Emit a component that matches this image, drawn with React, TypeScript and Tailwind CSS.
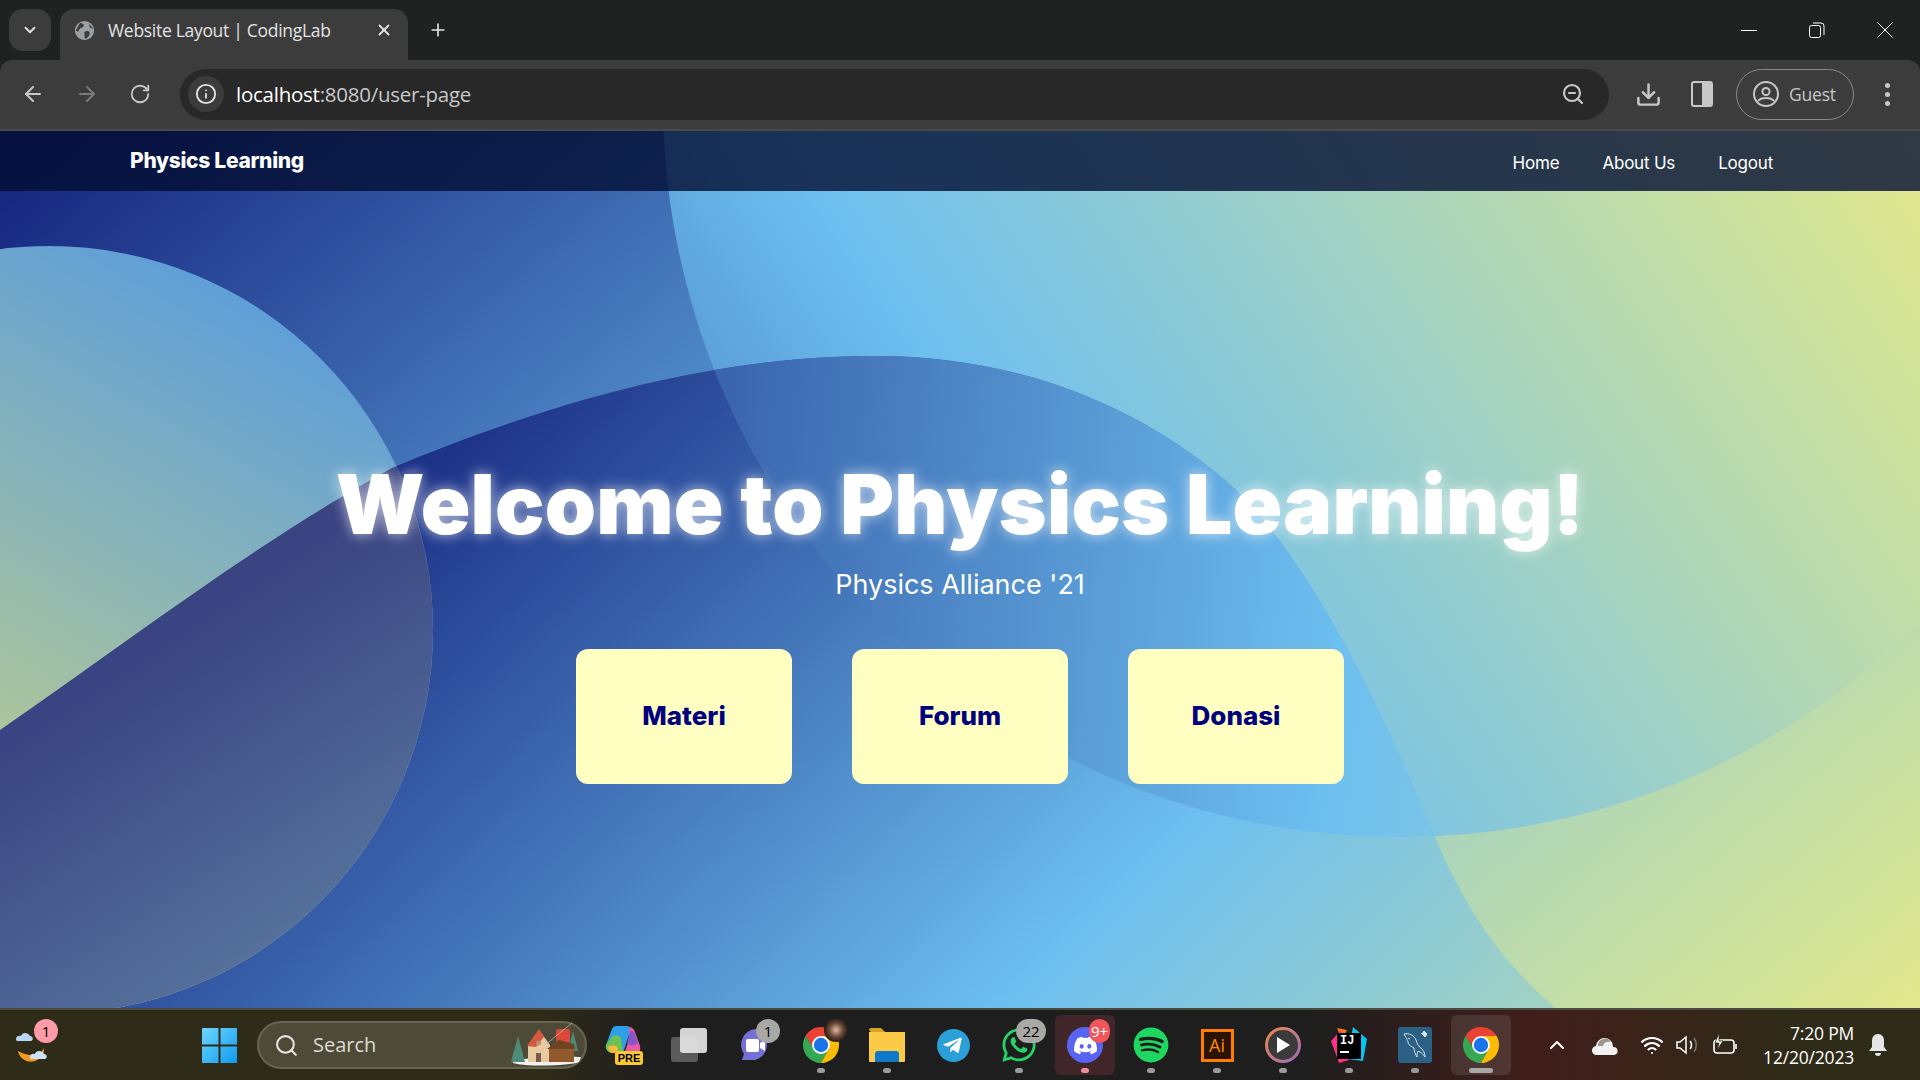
import { ArrowLeft, ArrowRight, ChevronDown, ChevronUp, Download, Info, Plus, RotateCw, Search, Wifi, X, ZoomOut } from "lucide-react";
import { FaDiscord, FaSpotify, FaTelegramPlane, FaWhatsapp } from "react-icons/fa";
import type { ReactNode } from "react";

const ChromeLogo = ({ size = 36 }: { size?: number }) => (
  <svg width={size} height={size} viewBox="4 4 40 40">
    <path d="M41.32 14A20 20 0 0 0 6.68 14L16 28L24 14Z" fill="#ea4335" />
    <path d="M6.68 14A20 20 0 0 0 24 44L33 28L16 28Z" fill="#34a853" />
    <path d="M24 44A20 20 0 0 0 41.32 14L24 14L33 28Z" fill="#fbbc04" />
    <circle cx="24" cy="24" r="10" fill="#fff" />
    <circle cx="24" cy="24" r="8" fill="#1a73e8" />
  </svg>
);

const HeroShapes = () => (
  <svg className="absolute inset-0 h-full w-full" viewBox="0 131 1920 877" preserveAspectRatio="none">
    <defs>
      <linearGradient id="base" gradientUnits="userSpaceOnUse" x1="0" y1="191" x2="1213" y2="1614">
        <stop offset="0" stopColor="#17267f" />
        <stop offset="0.5" stopColor="#6dbff0" />
        <stop offset="1" stopColor="#e2e88c" />
      </linearGradient>
      <linearGradient id="ring" gradientUnits="userSpaceOnUse" x1="104" y1="811" x2="1657" y2="-231">
        <stop offset="0" stopColor="#17267f" />
        <stop offset="0.5" stopColor="#6dbff0" />
        <stop offset="1" stopColor="#e2e88c" />
      </linearGradient>
      <linearGradient id="wave" gradientUnits="userSpaceOnUse" x1="195" y1="600" x2="1385" y2="1819">
        <stop offset="0" stopColor="#17267f" />
        <stop offset="0.5" stopColor="#6dbff0" />
        <stop offset="1" stopColor="#e2e88c" />
      </linearGradient>
      <linearGradient id="waveRing" gradientUnits="userSpaceOnUse" x1="285" y1="333" x2="2433" y2="566">
        <stop offset="0" stopColor="#17267f" />
        <stop offset="0.5" stopColor="#6dbff0" />
        <stop offset="1" stopColor="#e2e88c" />
      </linearGradient>
      <linearGradient id="left" gradientUnits="userSpaceOnUse" x1="250" y1="300" x2="0" y2="750">
        <stop offset="0" stopColor="#5f9fd8" />
        <stop offset="1" stopColor="#afc69a" />
      </linearGradient>
      <linearGradient id="leftWave" gradientUnits="userSpaceOnUse" x1="50" y1="720" x2="250" y2="1020">
        <stop offset="0" stopColor="#3a4482" />
        <stop offset="1" stopColor="#5a78a0" />
      </linearGradient>
      <clipPath id="waveClip">
        <path d="M0 730C130 640 260 540 392 468C520 415 690 356 875 356C1010 356 1130 400 1224 479C1300 545 1375 690 1434 835C1470 920 1510 970 1560 1012L0 1012Z" />
      </clipPath>
    </defs>
    <rect x="0" y="131" width="1920" height="877" fill="url(#base)" />
    <circle cx="1400" cy="100" r="737" fill="url(#ring)" />
    <path d="M0 730C130 640 260 540 392 468C520 415 690 356 875 356C1010 356 1130 400 1224 479C1300 545 1375 690 1434 835C1470 920 1510 970 1560 1012L0 1012Z" fill="url(#wave)" />
    <circle cx="1400" cy="100" r="737" fill="url(#waveRing)" clipPath="url(#waveClip)" />
    <circle cx="49" cy="630" r="384" fill="url(#left)" />
    <circle cx="49" cy="630" r="384" fill="url(#leftWave)" clipPath="url(#waveClip)" />
  </svg>
);

const TabBar = () => (
  <div className="flex h-[60px] items-end bg-[#202221] pl-[9px] text-[#e3e3e3]">
    <div className="mb-[9px] flex h-[42px] w-[42px] items-center justify-center rounded-[14px] bg-[#3c3c3c]">
      <ChevronDown className="h-[18px] w-[18px]" strokeWidth={2.5} />
    </div>
    <div className="ml-[9px] flex h-[51px] w-[348px] items-center rounded-t-[14px] bg-[#3c3c3c] pb-[9px] pl-[14px] pr-[15px]">
      <svg width="21" height="21" viewBox="0 0 24 24" className="shrink-0">
        <circle cx="12" cy="12" r="11" fill="#9aa0a6" />
        <path d="M7 3c3 1 5 2 4 4s-4 1-5 4-3 2-4 1M13 13c3-1 5 0 5 2s-2 5-4 6-2-2-2-4-1-3 1-4M17 4c1 2 0 4 2 5l3 1" fill="#3c3c3c" />
      </svg>
      <span className="ml-[13px] flex-1 font-['Open_Sans',sans-serif] text-[17.5px] tracking-[-0.3px]">Website Layout | CodingLab</span>
      <X className="h-[18px] w-[18px]" strokeWidth={2.4} />
    </div>
    <div className="mb-[19px] ml-[20px] flex w-[20px] items-center justify-center">
      <Plus className="h-[22px] w-[22px]" strokeWidth={2} />
    </div>
    <div className="mb-[22px] ml-auto flex items-center gap-[52px] pr-[27px]">
      <div className="h-px w-4 bg-white" />
      <svg width="16" height="16" viewBox="0 0 16 16" fill="none" stroke="#fff">
        <rect x="0.5" y="3.5" width="11" height="12" rx="2" />
        <path d="M4 1h8a3 3 0 0 1 3 3v9" />
      </svg>
      <svg width="16" height="16" viewBox="0 0 16 16" stroke="#fff">
        <path d="M0.5 0.5l15 15M15.5 0.5l-15 15" />
      </svg>
    </div>
  </div>
);

const Toolbar = () => (
  <div className="flex h-[71px] items-center rounded-t-[12px] border-b-2 border-[#4a4a4a] bg-[#3c3c3c] pb-[1px] text-[#c7c7c7]">
    <div className="flex w-[180px] items-center pl-[21px]">
      <ArrowLeft className="h-[24px] w-[24px]" strokeWidth={2} />
      <ArrowRight className="ml-[30px] h-[24px] w-[24px] text-[#7b7b7b]" strokeWidth={2} />
      <RotateCw className="ml-[30px] h-[22px] w-[22px]" strokeWidth={2} />
    </div>
    <div className="flex h-[51px] w-[1429px] items-center rounded-full bg-[#282828] pl-[8px] pr-[24px]">
      <div className="flex h-[36px] w-[36px] items-center justify-center rounded-full bg-[#3c3c3c]">
        <Info className="h-[22px] w-[22px] text-[#e3e3e3]" />
      </div>
      <div className="ml-[12px] flex-1 font-['Open_Sans',sans-serif] text-[20.5px] tracking-[-0.25px] text-[#c7c7c7]">
        <span className="text-white">localhost</span>:8080/user-page
      </div>
      <ZoomOut className="h-[24px] w-[24px]" strokeWidth={2.2} />
    </div>
    <Download className="ml-[26px] h-[27px] w-[27px]" strokeWidth={2.2} />
    <div className="ml-[29px] flex h-[26px] w-[22px] overflow-hidden rounded-[3px] border-[2.5px] border-[#c7c7c7]">
      <div className="w-1/2" />
      <div className="w-1/2 bg-[#c7c7c7]" />
    </div>
    <div className="ml-[23px] flex h-[51px] w-[118px] items-center rounded-full border-[1.5px] border-[#8a8a8a] pl-[16px]">
      <svg width="26" height="26" viewBox="0 0 26 26" fill="none" stroke="#c7c7c7" strokeWidth="2">
        <circle cx="13" cy="13" r="12" />
        <circle cx="13" cy="10.5" r="3.6" />
        <path d="M5 20c3-4 13-4 16 0" />
      </svg>
      <span className="ml-[10px] font-['Open_Sans',sans-serif] text-[17.5px] tracking-[-0.2px]">Guest</span>
    </div>
    <div className="ml-[31px] flex flex-col gap-[4px]">
      <div className="h-[5px] w-[5px] rounded-full bg-[#c7c7c7]" />
      <div className="h-[5px] w-[5px] rounded-full bg-[#c7c7c7]" />
      <div className="h-[5px] w-[5px] rounded-full bg-[#c7c7c7]" />
    </div>
  </div>
);

const SiteNav = () => (
  <nav className="relative flex h-[60px] items-center bg-[#020e32]/80 pl-[130px] pr-[147px] font-['Inter',sans-serif] text-white">
    <div className="text-[21px] font-extrabold tracking-[-0.3px]">Physics Learning</div>
    <div className="ml-auto mt-[5px] flex items-center gap-[43px] text-[17px] tracking-[-0.2px]">
      <span>Home</span>
      <span>About Us</span>
      <span>Logout</span>
    </div>
  </nav>
);

const Hero = () => (
  <div className="relative flex flex-col items-center pt-[258px] font-['Inter',sans-serif] text-white">
    <h1 className="text-[82px] font-black leading-[112px] tracking-[0.2px] [text-shadow:0_0_14px_rgba(255,255,255,0.7)]">Welcome to Physics Learning!</h1>
    <p className="mt-[3px] text-[27px] leading-[42px]">Physics Alliance '21</p>
    <div className="mt-[43px] flex gap-[60px]">
      {["Materi", "Forum", "Donasi"].map((label) => (
        <div key={label} className="flex h-[135px] w-[216px] items-center justify-center rounded-[12px] bg-[#ffffc2] pb-[2px] text-[26px] font-extrabold text-[#00007f]">
          {label}
        </div>
      ))}
    </div>
  </div>
);

type SlotProps = { children: ReactNode; dot?: "grey" | "pink" | "wide"; bg?: string };

const Slot = ({ children, dot, bg }: SlotProps) => (
  <div className={`relative flex h-[60px] w-[60px] items-center justify-center rounded-[6px] ${bg ?? ""}`}>
    {children}
    {dot === "grey" && <div className="absolute bottom-[2px] h-[5px] w-[8px] rounded-full bg-[#9a9a9a]" />}
    {dot === "pink" && <div className="absolute bottom-[2px] h-[5px] w-[8px] rounded-full bg-[#f58a9b]" />}
    {dot === "wide" && <div className="absolute bottom-[2px] h-[5px] w-[24px] rounded-full bg-[#a8a8a8]" />}
  </div>
);

const Badge = ({ text, className }: { text: string; className: string }) => (
  <div className={`absolute flex h-[24px] items-center justify-center rounded-full font-['Open_Sans',sans-serif] text-[15px] ${className}`}>{text}</div>
);

const SearchScene = () => (
  <svg width="74" height="44" viewBox="0 0 74 44">
    <path d="M3 38c12-4 55-5 68-4l-2 5c-8 4-54 5-66 1z" fill="#f3f1ee" />
    <path d="M8 13l7 26H1z" fill="#4e8a78" />
    <path d="M63 8l5 20H58z" fill="#4e8a78" />
    <path d="M18 22l11-15 11 15v17H18z" fill="#e8c9a0" />
    <path d="M17 23l12-17 5 8-8 10z" fill="#d5583b" />
    <rect x="26" y="30" width="5" height="9" fill="#7a5a48" />
    <circle cx="28.5" cy="20" r="2.5" fill="#b98e78" />
    <rect x="46" y="6" width="14" height="14" rx="2" fill="#d94a3a" />
    <path d="M35 22L62 0" stroke="#c9c4c0" strokeWidth="0.7" />
    <rect x="39" y="25" width="25" height="14" fill="#8f5a2c" />
    <path d="M37 26l12-9 15 4 1 5z" fill="#6d4321" />
  </svg>
);

const Taskbar = () => (
  <footer className="relative flex h-[72px] items-center border-t-2 border-[#4b4a40] bg-[linear-gradient(90deg,#2e2b18_0%,#2e2b18_28%,#1e1e1e_34%,#1e1e1e_68%,#401e1a_80%,#2e2b18_94%)] text-white">
    <div className="relative ml-[14px] h-[44px] w-[44px]">
      <svg width="44" height="44" viewBox="0 0 44 44">
        <path d="M4 28c2 12 19 15 25 3 1-2 1-4 1-6-3 7-14 10-26 3z" fill="#f09a1f" />
        <path d="M2 16c0-3 3-4 5-3 1-4 7-4 9 0 3 0 4 4 1 5H4c-2 0-2-1-2-2z" fill="#b9d6f5" />
        <path d="M16 34c0-3 3-4 5-3 1-4 7-4 9 0 3 0 4 4 1 5H18c-2 0-2-1-2-2z" fill="#cfe2f8" />
      </svg>
      <Badge text="1" className="right-0 -top-[4px] w-[24px] bg-[#ff9aa8] text-black" />
    </div>
    <svg width="35" height="35" viewBox="0 0 35 35" className="ml-[144px]">
      <defs>
        <linearGradient id="win" x1="0" y1="0" x2="1" y2="1">
          <stop offset="0" stopColor="#6fd6ff" />
          <stop offset="1" stopColor="#0f9bf0" />
        </linearGradient>
      </defs>
      <path d="M1 0h15.5v16.5H0V1a1 1 0 0 1 1-1zM18.5 0H34a1 1 0 0 1 1 1v15.5H18.5zM0 18.5h16.5V35H1a1 1 0 0 1-1-1zM18.5 18.5H35V34a1 1 0 0 1-1 1H18.5z" fill="url(#win)" />
    </svg>
    <div className="ml-[20px] flex h-[48px] w-[330px] items-center rounded-full border-2 border-[#66654f] bg-[#4d4b37] pl-[15px] pr-[1px]">
      <Search className="h-[25px] w-[25px] text-[#e6e6e6]" strokeWidth={2} />
      <span className="ml-[14px] flex-1 font-['Open_Sans',sans-serif] text-[20px] text-[#dcdcd4]">Search</span>
      <SearchScene />
    </div>
    <div className="relative ml-[18px] h-[40px] w-[36px]">
      <svg width="36" height="32" viewBox="0 0 36 32">
        <path d="M11 1h11c2 0 3 1 4 3l-8 24H8c-5 0-8-4-7-8L7 4c1-2 2-3 4-3z" fill="#2f9fe8" />
        <path d="M7 12c2-2 6-2 9 1l2 15H8c-5 0-8-4-7-8z" fill="#6cc24a" />
        <path d="M3 22c3-2 8-2 10 1l-1 5H8c-3 0-4-2-5-6z" fill="#f4b73f" />
        <path d="M24 2c3 0 5 2 6 5l5 14c1 4-1 8-5 8H19l5-14z" fill="#e85aa5" />
        <path d="M25 6c3 0 4 1 5 3l3 9c-3 3-8 3-11 1z" fill="#8a55c8" />
      </svg>
      <div className="absolute -right-[2px] bottom-0 flex h-[14px] w-[28px] items-center justify-center rounded-[3px] bg-[#fdc92f] font-['Liberation_Sans',sans-serif] text-[11px] font-bold leading-none text-black">PRE</div>
    </div>
    <div className="ml-[18px] flex items-center gap-[6px]">
      <Slot>
        <div className="relative h-[34px] w-[36px]">
          <div className="absolute bottom-0 left-0 h-[25px] w-[27px] rounded-[3px] bg-[#5b5b5b]" />
          <div className="absolute right-0 top-0 h-[25px] w-[27px] rounded-[3px] bg-[#e8e8e8]/90" />
        </div>
      </Slot>
      <Slot>
        <svg width="34" height="36" viewBox="0 0 34 36">
          <path d="M17 2a16 16 0 0 1 0 31H4l2-6A16 16 0 0 1 17 2z" fill="#7470d8" />
          <rect x="8" y="12" width="13" height="13" rx="2" fill="#fff" />
          <path d="M22 16l5-3v11l-5-3z" fill="#fff" />
        </svg>
        <Badge text="1" className="right-[5px] top-[4px] w-[24px] bg-[#a8a8a4] text-black" />
      </Slot>
      <Slot dot="grey">
        <ChromeLogo size={36} />
        <div className="absolute right-[3px] top-[3px] h-[24px] w-[24px] rounded-full bg-[radial-gradient(circle_at_50%_50%,#e8b8a8_0%,#6a4a38_40%,#1a1410_75%)]" />
      </Slot>
      <Slot dot="grey">
        <svg width="36" height="34" viewBox="0 0 36 34">
          <path d="M0 2a2 2 0 0 1 2-2h10l4 4H2z" fill="#d9a520" />
          <path d="M0 4h36v29a1 1 0 0 1-1 1H1a1 1 0 0 1-1-1z" fill="#fdca45" />
          <path d="M6 34V26a3 3 0 0 1 3-3h18a3 3 0 0 1 3 3v8z" fill="#0f79c9" />
        </svg>
      </Slot>
      <Slot>
        <div className="flex h-[33px] w-[33px] items-center justify-center rounded-full bg-[#2a9fd8]">
          <FaTelegramPlane className="mr-[2px] h-[21px] w-[21px] text-white" />
        </div>
      </Slot>
      <Slot dot="grey">
        <FaWhatsapp className="h-[38px] w-[38px] text-[#25d366]" />
        <Badge text="22" className="left-[27px] top-[4px] w-[30px] bg-[#a8a8a4] text-black" />
      </Slot>
      <Slot dot="pink" bg="bg-[#402629]">
        <div className="flex h-[36px] w-[36px] items-center justify-center rounded-full bg-[#5865f2]">
          <FaDiscord className="h-[25px] w-[25px] text-white" />
        </div>
        <Badge text="9+" className="right-[5px] top-[4px] w-[21px] bg-[#f0565c] text-white" />
      </Slot>
      <Slot dot="grey">
        <FaSpotify className="h-[36px] w-[36px] text-[#1ed760]" />
      </Slot>
      <Slot dot="grey">
        <div className="flex h-[33px] w-[33px] items-center justify-center border-[3px] border-[#ff7c00] bg-[#2a1300] font-['Open_Sans',sans-serif] text-[18px] leading-none text-[#ff8a00]">Ai</div>
      </Slot>
      <Slot dot="grey">
        <div className="flex h-[36px] w-[36px] items-center justify-center rounded-full bg-[linear-gradient(135deg,#f08a4a,#9a6ac0)] p-[3px]">
          <div className="flex h-full w-full items-center justify-center rounded-full bg-[#3a3a3a]">
            <svg width="14" height="16" viewBox="0 0 14 16">
              <path d="M1 0l13 8-13 8z" fill="#fff" />
            </svg>
          </div>
        </div>
      </Slot>
      <Slot dot="grey">
        <div className="relative h-[36px] w-[36px]">
          <svg width="36" height="36" viewBox="0 0 36 36" className="absolute inset-0">
            <path d="M6 1l10 2 -5 10z" fill="#f97a12" />
            <path d="M0 14L10 3l8 30-10 3z" fill="#ff318c" />
            <path d="M22 0l14 12-4 22-16-2z" fill="#07c3f2" />
          </svg>
          <div className="absolute left-[6px] top-[6px] h-[26px] w-[24px] bg-black pl-[3px] font-['Liberation_Mono',monospace] text-[12px] font-bold leading-[16px] text-white">
            IJ
            <div className="mt-[2px] h-[2px] w-[9px] bg-white" />
          </div>
        </div>
      </Slot>
      <Slot dot="grey">
        <div className="flex h-[36px] w-[34px] items-center justify-center rounded-[3px] bg-[#2c6186]">
          <svg width="30" height="32" viewBox="0 0 30 32" fill="none" stroke="#d8e4ec" strokeWidth="1">
            <path d="M4 5c5-1 10 1 12 6 1 4 3 7 6 9 2 2 3 5 3 8-2-3-4-5-7-6-1 2-1 4-1 6-2-3-3-6-3-9-3-2-6-3-6-6 0-1-1-3-4-8z" />
            <path d="M8 9l2 1" />
            <path d="M21 4l4 4M24 2l3 3-2 3-3-3z" fill="#d8e4ec" />
          </svg>
        </div>
      </Slot>
      <Slot dot="wide" bg="bg-white/10">
        <ChromeLogo size={36} />
      </Slot>
    </div>
    <ChevronUp className="ml-[34px] h-[24px] w-[24px]" strokeWidth={2} />
    <svg width="26" height="20" viewBox="0 0 26 20" className="ml-[23px]">
      <path d="M5 20a4.5 4.5 0 0 1-1-9 8 8 0 0 1 17 1 4 4 0 0 1 1 8z" fill="#f2f2f2" />
      <path d="M6 11a7 7 0 0 1 13-4c-4-1-7 0-8 4z" fill="#9a9690" />
    </svg>
    <Wifi className="ml-[22px] h-[24px] w-[24px]" strokeWidth={2.2} />
    <svg width="24" height="24" viewBox="0 0 24 24" fill="none" stroke="#fff" strokeWidth="1.5" className="ml-[11px]">
      <path d="M2 9h3l6-5v16l-6-5H2z" />
      <path d="M15 8c2 2 2 6 0 8" />
      <path d="M19 5c3 4 3 10 0 14" stroke="#777" />
    </svg>
    <svg width="26" height="26" viewBox="0 0 26 26" fill="none" stroke="#fff" strokeWidth="1.6" className="ml-[13px]">
      <rect x="2" y="8" width="20" height="13" rx="3" />
      <path d="M24 12v5" />
      <path d="M7 1L3 11h4l-2 7 6-9H7z" fill="#fff" stroke="#2e2b18" strokeWidth="0.8" />
    </svg>
    <div className="ml-[20px] w-[96px] text-right font-['Open_Sans',sans-serif] text-[17.5px] leading-[24px] tracking-[-0.2px]">
      <div>7:20 PM</div>
      <div>12/20/2023</div>
    </div>
    <svg width="20" height="24" viewBox="0 0 20 24" className="ml-[14px]" fill="#e6e6e6">
      <path d="M10 1c4 0 6 3 6 7v6l3 4H1l3-4V8c0-4 2-7 6-7z" />
      <path d="M7 20h6a3 3 0 0 1-6 0z" />
    </svg>
  </footer>
);

export default function App() {
  return (
    <div className="flex h-[1080px] w-[1920px] flex-col overflow-hidden bg-[#202221]">
      <TabBar />
      <Toolbar />
      <main className="relative flex-1 overflow-hidden">
        <HeroShapes />
        <SiteNav />
        <Hero />
      </main>
      <Taskbar />
    </div>
  );
}
